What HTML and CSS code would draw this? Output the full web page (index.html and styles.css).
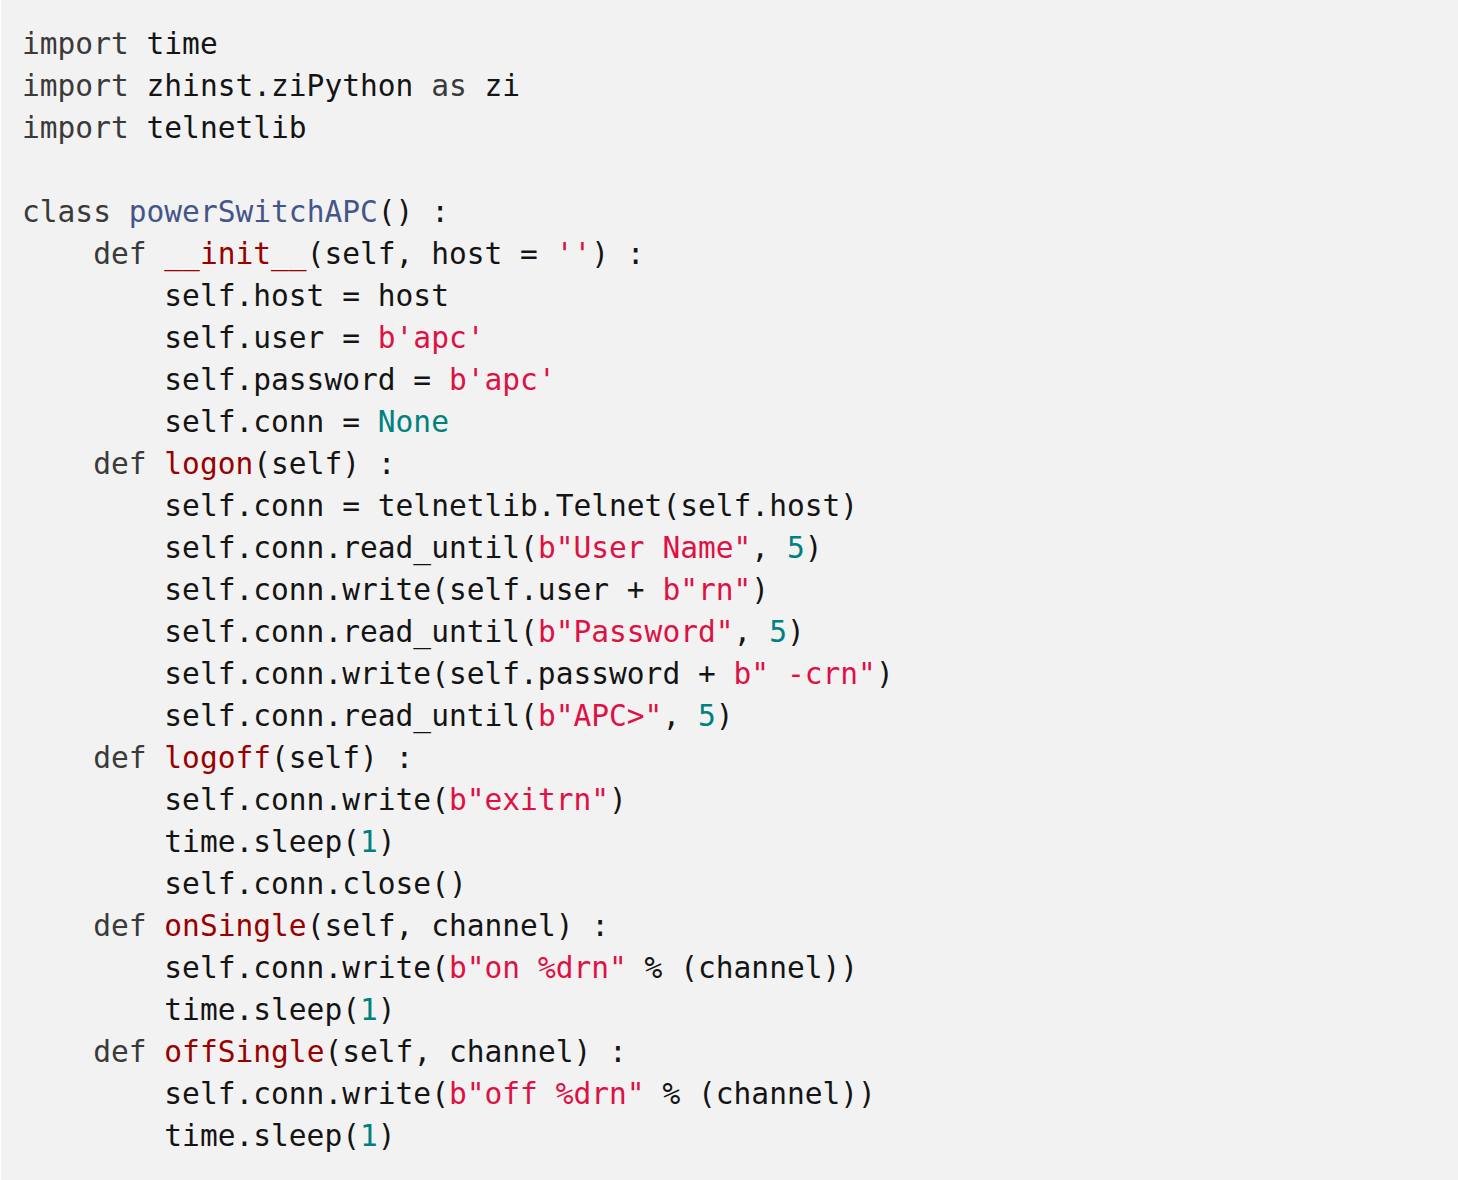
FILE: index.html
```html
<!DOCTYPE html>
<html>
<head>
<meta charset="utf-8">
<link rel="stylesheet" href="styles.css">
</head>
<body>
<pre class="code"><code><span class="kw">import</span> time
<span class="kw">import</span> zhinst.ziPython <span class="kw">as</span> zi
<span class="kw">import</span> telnetlib

<span class="kw">class</span> <span class="cls">powerSwitchAPC</span>() :
    <span class="kw">def</span> <span class="fn">__init__</span>(self, host = <span class="str">''</span>) :
        self.host = host
        self.user = <span class="str">b'apc'</span>
        self.password = <span class="str">b'apc'</span>
        self.conn = <span class="num">None</span>
    <span class="kw">def</span> <span class="fn">logon</span>(self) :
        self.conn = telnetlib.Telnet(self.host)
        self.conn.read_until(<span class="str">b"User Name"</span>, <span class="num">5</span>)
        self.conn.write(self.user + <span class="str">b"rn"</span>)
        self.conn.read_until(<span class="str">b"Password"</span>, <span class="num">5</span>)
        self.conn.write(self.password + <span class="str">b" -crn"</span>)
        self.conn.read_until(<span class="str">b"APC&gt;"</span>, <span class="num">5</span>)
    <span class="kw">def</span> <span class="fn">logoff</span>(self) :
        self.conn.write(<span class="str">b"exitrn"</span>)
        time.sleep(<span class="num">1</span>)
        self.conn.close()
    <span class="kw">def</span> <span class="fn">onSingle</span>(self, channel) :
        self.conn.write(<span class="str">b"on %drn"</span> % (channel))
        time.sleep(<span class="num">1</span>)
    <span class="kw">def</span> <span class="fn">offSingle</span>(self, channel) :
        self.conn.write(<span class="str">b"off %drn"</span> % (channel))
        time.sleep(<span class="num">1</span>)</code></pre>
</body>
</html>
```
FILE: styles.css
```css
html, body {
  margin: 0;
  padding: 0;
  background: #ffffff;
}
.code {
  margin: 0 0 0 1px;
  padding: 23px 20px 30px 21px;
  background: #f2f2f2;
  font-family: "DejaVu Sans Mono", "Liberation Mono", monospace;
  font-size: 29.55px;
  line-height: 42px;
  color: #141414;
  min-height: 1180px;
  box-sizing: border-box;
  white-space: pre;
}
.kw { color: #3a3a3a; }
.cls { color: #445588; }
.fn { color: #990000; }
.str { color: #dd1144; }
.num { color: #008080; }
```
